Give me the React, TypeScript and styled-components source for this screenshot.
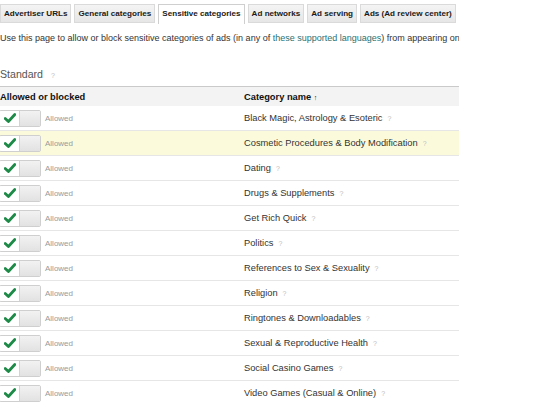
import styled, { createGlobalStyle } from 'styled-components';

const tabs = [
  'Advertiser URLs',
  'General categories',
  'Sensitive categories',
  'Ad networks',
  'Ad serving',
  'Ads (Ad review center)',
];

const categories = [
  'Black Magic, Astrology & Esoteric',
  'Cosmetic Procedures & Body Modification',
  'Dating',
  'Drugs & Supplements',
  'Get Rich Quick',
  'Politics',
  'References to Sex & Sexuality',
  'Religion',
  'Ringtones & Downloadables',
  'Sexual & Reproductive Health',
  'Social Casino Games',
  'Video Games (Casual & Online)',
];

const GlobalStyle = createGlobalStyle`
  html, body {
    margin: 0;
    background: #fff;
    overflow: hidden;
  }
  body {
    font-family: "Liberation Sans", Arial, sans-serif;
    color: #333;
  }
`;

const CheckIcon = () => (
  <svg width="12" height="10" viewBox="0 0 12 10">
    <path
      d="M1.2 5.4 L4.4 8.5 L10.8 1.5"
      fill="none"
      stroke="#1d8a47"
      strokeWidth="2.8"
      strokeLinecap="round"
      strokeLinejoin="round"
    />
  </svg>
);

const App = () => {
  return (
    <Page>
      <GlobalStyle />
      <TabBar>
        {tabs.map((t) => (
          <Tab key={t} $active={t === 'Sensitive categories'}>
            {t}
          </Tab>
        ))}
      </TabBar>

      <Intro>
        Use this page to allow or block sensitive categories of ads (in any of{' '}
        <Link>these supported languages</Link>) from appearing on your site
      </Intro>

      <SectionTitle>
        Standard <Help>?</Help>
      </SectionTitle>

      <Table>
        <HeaderRow>
          <HeaderCell>Allowed or blocked</HeaderCell>
          <HeaderCell $indent>
            Category name <SortArrow>↑</SortArrow>
          </HeaderCell>
        </HeaderRow>
        {categories.map((c, i) => (
          <Row key={c} $highlight={i === 1}>
            <ToggleCell>
              <Toggle>
                <ToggleOn>
                  <CheckIcon />
                </ToggleOn>
                <ToggleOff />
              </Toggle>
              <StatusLabel>Allowed</StatusLabel>
            </ToggleCell>
            <NameCell>
              {c}
              <Help>?</Help>
            </NameCell>
          </Row>
        ))}
      </Table>
    </Page>
  );
};

export default App;

// the visible content is clipped at the table's right edge
const Page = styled.div`
  width: 459px;
  height: 404px;
  overflow: hidden;
`;

const TabBar = styled.div`
  display: flex;
  align-items: flex-start;
  gap: 3px;
  padding-top: 4px;
  height: 20px;
`;

const Tab = styled.div<{ $active?: boolean }>`
  height: ${({ $active }) => ($active ? '19px' : '17px')};
  line-height: 17px;
  padding: 0 3px;
  box-sizing: content-box;
  font-size: 8.1px;
  font-weight: bold;
  color: #1a1a1a;
  white-space: nowrap;
  background: ${({ $active }) =>
    $active ? '#fff' : 'linear-gradient(#f4f4f4, #e6e6e6)'};
  border: 1px solid ${({ $active }) => ($active ? '#cfcfcf' : '#dadada')};
  border-bottom: ${({ $active }) => ($active ? 'none' : '1px solid #dadada')};
`;

const Intro = styled.div`
  margin-top: 8px;
  font-size: 9px;
  line-height: 12px;
  white-space: nowrap;
  color: #333;
`;

const Link = styled.span`
  color: #2b7171;
`;

const SectionTitle = styled.div`
  margin-top: 23px;
  font-size: 10.6px;
  line-height: 14px;
  color: #555;
`;

const Help = styled.span`
  margin-left: 5px;
  font-size: 7px;
  color: #bdbdbd;
`;

const Table = styled.div`
  margin-top: 3px;
  width: 459px;
  border-top: 1px solid #cacaca;
`;

const HeaderRow = styled.div`
  display: grid;
  grid-template-columns: 240px 1fr;
  height: 19px;
  background: #f3f3f3;
  align-items: center;
`;

const HeaderCell = styled.div<{ $indent?: boolean }>`
  padding-left: ${({ $indent }) => ($indent ? '4px' : '0')};
  font-size: 9.3px;
  font-weight: bold;
  color: #111;
  white-space: nowrap;
`;

const SortArrow = styled.span`
  font-size: 7px;
  font-weight: bold;
`;

const Row = styled.div<{ $highlight?: boolean }>`
  display: grid;
  grid-template-columns: 240px 1fr;
  height: 24px;
  align-items: center;
  border-bottom: 1px solid #e6e6e6;
  background: ${({ $highlight }) => ($highlight ? '#fbfbdc' : '#fff')};
`;

const ToggleCell = styled.div`
  display: flex;
  align-items: center;
  gap: 4px;
`;

const Toggle = styled.div`
  display: flex;
  height: 15px;
  margin-left: -1px;
  border: 1px solid #cfcfcf;
  border-radius: 2px;
  overflow: hidden;
`;

const ToggleOn = styled.div`
  width: 19px;
  display: flex;
  align-items: center;
  justify-content: center;
  background: #fff;
  border-right: 1px solid #d4d4d4;
`;

const ToggleOff = styled.div`
  width: 20px;
  background: linear-gradient(#f2f2f2, #e2e2e2);
`;

const StatusLabel = styled.span`
  font-size: 8px;
  color: #999;
`;

const NameCell = styled.div`
  padding-left: 4px;
  font-size: 9.3px;
  color: #333;
  white-space: nowrap;
`;
